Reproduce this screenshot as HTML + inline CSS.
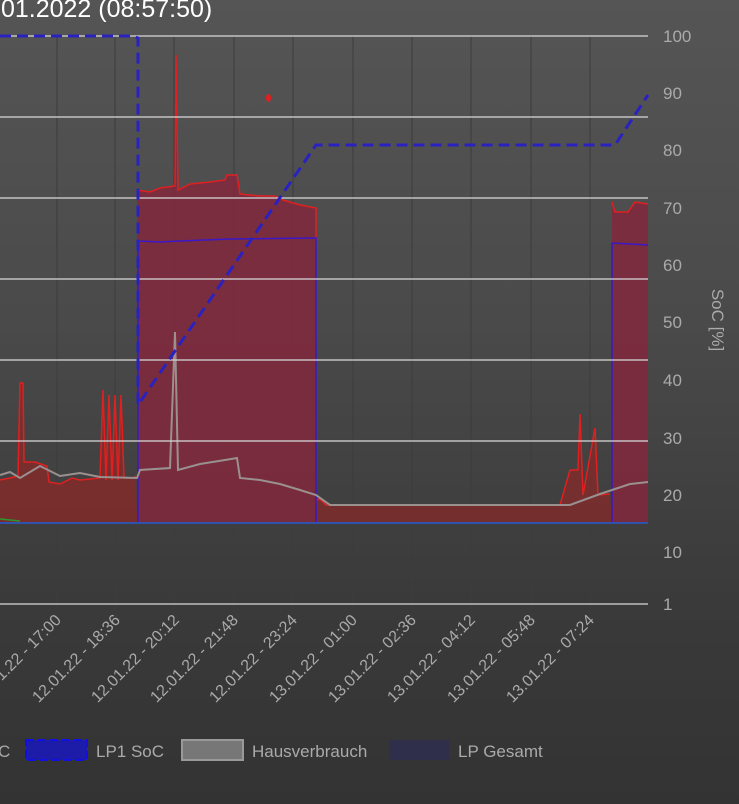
<!DOCTYPE html>
<html><head><meta charset="utf-8"><style>
html,body{margin:0;padding:0;width:739px;height:804px;overflow:hidden;background:linear-gradient(#555 0%,#4a4a4a 40%,#3a3a3a 75%,#333 100%);font-family:"Liberation Sans",sans-serif;}
</style></head><body>
<svg width="739" height="804" xmlns="http://www.w3.org/2000/svg" style="position:absolute;left:0;top:0">
<text x="-6" y="17" fill="#fff" font-size="25" font-family="Liberation Sans, sans-serif">.01.2022 (08:57:50)</text>
<g stroke="#3c3c3c" stroke-width="1">
<line x1="57" y1="36" x2="57" y2="612"/><line x1="115" y1="36" x2="115" y2="612"/><line x1="174" y1="36" x2="174" y2="612"/><line x1="234" y1="36" x2="234" y2="612"/><line x1="293" y1="36" x2="293" y2="612"/><line x1="353" y1="36" x2="353" y2="612"/><line x1="412" y1="36" x2="412" y2="612"/><line x1="471" y1="36" x2="471" y2="612"/><line x1="531" y1="36" x2="531" y2="612"/><line x1="590" y1="36" x2="590" y2="612"/>
</g>
<path fill="rgba(140,40,40,0.75)" d="M0,522 L0,480 L10,478 L18,476 L20,383 L23,383 L24,462 L35,462 L47,466 L49,482 L60,484 L72,478 L80,480 L100,478 L103,390 L106,480 L109,395 L112,480 L115,395 L118,480 L121,395 L124,478 L133,478 L136,476 L137,522 Z"/>
<path fill="rgba(130,40,60,0.85)" d="M137,522 L137,190 L150,192 L160,188 L175,186 L176,55 L178,190 L190,184 L210,182 L225,180 L227,175 L237,175 L240,194 L260,196 L275,196 L283,200 L300,205 L316,208 L316,522 Z"/>
<path fill="rgba(140,40,40,0.7)" d="M316,522 L316,500 L320,499 L326,505 L560,505 L570,470 L578,470 L580,414 L583,495 L595,428 L598,495 L610,494 L612,522 Z"/>
<path fill="rgba(130,40,60,0.85)" d="M612,522 L612,202 L615,212 L628,212 L635,202 L648,204 L648,522 Z"/>
<g fill="none" stroke="#e02020" stroke-width="1.5">
<path d="M0,480 L10,478 L18,476 L20,383 L23,383 L24,462 L35,462 L47,466 L49,482 L60,484 L72,478 L80,480 L100,478 L103,390 L106,480 L109,395 L112,480 L115,395 L118,480 L121,395 L124,478 L133,478 L136,476"/>
<path d="M137,190 L150,192 L160,188 L175,186 L176,55 L178,190 L190,184 L210,182 L225,180 L227,175 L237,175 L240,194 L260,196 L275,196 L283,200 L300,205 L316,208 L316,240"/>
<path d="M316,500 L320,499 L326,505 L560,505 L570,470 L578,470 L580,414 L583,495 L595,428 L598,495 L610,494"/>
<path d="M612,202 L615,212 L628,212 L635,202 L648,204"/>
<ellipse cx="268.5" cy="98" rx="2.5" ry="4" fill="#e02020" stroke="none"/>
</g>
<path fill="none" stroke="#3a18c8" stroke-width="1.5" d="M138,522 L138,241 L160,242 L180,241 L230,239 L316,238 L316,522 M612,522 L612,243 L630,244 L648,245"/>
<path fill="none" stroke="#9a9090" stroke-width="2" d="M0,475 L10,472 L20,478 L40,466 L60,476 L80,473 L100,477 L137,478 L140,470 L170,468 L175,332 L178,470 L200,464 L225,460 L237,458 L240,478 L260,480 L280,484 L300,490 L316,495 L330,505 L570,505 L600,494 L612,490 L630,484 L648,482"/>
<line x1="0" y1="523" x2="648" y2="523" stroke="#2a5ad0" stroke-width="1.5"/>
<line x1="0" y1="519" x2="20" y2="521" stroke="#2a9a2a" stroke-width="1.5"/>
<g stroke="#cfcfcf" stroke-width="1.5" opacity="0.9">
<line x1="0" y1="36" x2="648" y2="36"/><line x1="0" y1="117" x2="648" y2="117"/><line x1="0" y1="198" x2="648" y2="198"/><line x1="0" y1="279" x2="648" y2="279"/><line x1="0" y1="360" x2="648" y2="360"/><line x1="0" y1="441" x2="648" y2="441"/><line x1="0" y1="604" x2="648" y2="604"/>
</g>
<path fill="none" stroke="#2a22c0" stroke-width="3" stroke-dasharray="11,6" d="M0,36 L133,36 L138,38 L138,405 L316,145 L615,145 L648,95"/>
<g fill="#aaa" font-size="17">
<text x="663" y="42">100</text><text x="663" y="99">90</text><text x="663" y="156">80</text><text x="663" y="214">70</text><text x="663" y="271">60</text><text x="663" y="328">50</text><text x="663" y="386">40</text><text x="663" y="444">30</text><text x="663" y="501">20</text><text x="663" y="558">10</text><text x="663" y="610">1</text>
</g>
<text transform="translate(712,320) rotate(90)" text-anchor="middle" fill="#aaa" font-size="17">SoC [%]</text>
<g fill="#aaa" font-size="16" text-anchor="end">
<text transform="translate(62,621) rotate(-45)">12.01.22 - 17:00</text>
<text transform="translate(121,621) rotate(-45)">12.01.22 - 18:36</text>
<text transform="translate(180,621) rotate(-45)">12.01.22 - 20:12</text>
<text transform="translate(239,621) rotate(-45)">12.01.22 - 21:48</text>
<text transform="translate(298,621) rotate(-45)">12.01.22 - 23:24</text>
<text transform="translate(358,621) rotate(-45)">13.01.22 - 01:00</text>
<text transform="translate(417,621) rotate(-45)">13.01.22 - 02:36</text>
<text transform="translate(476,621) rotate(-45)">13.01.22 - 04:12</text>
<text transform="translate(536,621) rotate(-45)">13.01.22 - 05:48</text>
<text transform="translate(595,621) rotate(-45)">13.01.22 - 07:24</text>
</g>
<g font-size="17" fill="#aaa">
<text x="-2" y="757">C</text>
<rect x="26" y="740" width="61" height="20" fill="#1c1ca8" stroke="#1010e0" stroke-width="2" stroke-dasharray="8,4"/>
<text x="96" y="757">LP1 SoC</text>
<rect x="182" y="740" width="61" height="20" fill="#777" stroke="#999" stroke-width="2"/>
<text x="252" y="757">Hausverbrauch</text>
<rect x="389" y="740" width="60" height="20" fill="#2f2f4c"/>
<text x="458" y="757">LP Gesamt</text>
</g>
</svg>
</body></html>
